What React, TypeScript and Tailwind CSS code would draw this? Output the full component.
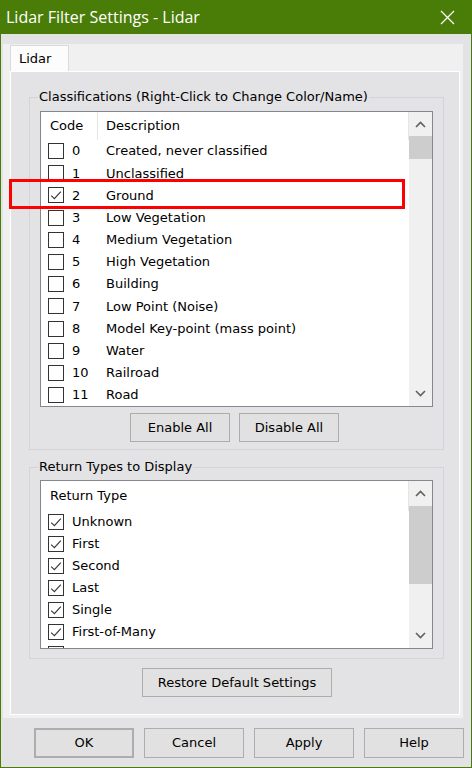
import React from "react";

// classification rows: code, description, checked
const classifications: [string, string, boolean][] = [
  ["0", "Created, never classified", false],
  ["1", "Unclassified", false],
  ["2", "Ground", true],
  ["3", "Low Vegetation", false],
  ["4", "Medium Vegetation", false],
  ["5", "High Vegetation", false],
  ["6", "Building", false],
  ["7", "Low Point (Noise)", false],
  ["8", "Model Key-point (mass point)", false],
  ["9", "Water", false],
  ["10", "Railroad", false],
  ["11", "Road", false],
];

const returnTypes = ["Unknown", "First", "Second", "Last", "Single", "First-of-Many"];

function Check({ on }: { on: boolean }) {
  return (
    <span className="w-[16px] h-[16px] border border-[#333333] bg-white flex items-center justify-center shrink-0">
      {on && (
        <svg width="14" height="14" viewBox="0 0 14 14">
          <path d="M2.2 7.6 L5.4 10.6 L11.8 3.6" fill="none" stroke="#3a3a3a" strokeWidth="1.2" />
        </svg>
      )}
    </span>
  );
}

function Chevron({ up }: { up?: boolean }) {
  return (
    <svg width="11" height="7" viewBox="0 0 11 7">
      <path
        d={up ? "M1 6 L5.5 1.5 L10 6" : "M1 1 L5.5 5.5 L10 1"}
        fill="none"
        stroke="#606060"
        strokeWidth="1.6"
      />
    </svg>
  );
}

function ScrollBar({ upClass, thumbClass }: { upClass: string; thumbClass: string }) {
  return (
    <div className="w-[23px] h-full bg-[#f0f0f0] flex flex-col shrink-0">
      <div className={`${upClass} flex items-center justify-center shrink-0`}>
        <Chevron up />
      </div>
      <div className={`${thumbClass} bg-[#cdcdcd] shrink-0`} />
      <div className="flex-1" />
      <div className="h-[25px] flex items-center justify-center shrink-0">
        <Chevron />
      </div>
    </div>
  );
}

function Button({ label, className = "" }: { label: string; className?: string }) {
  return (
    <button
      className={`bg-[#e1e1e1] border border-[#adadad] text-black text-[13px] leading-[16px] flex items-center justify-center ${className}`}
    >
      {label}
    </button>
  );
}

export default function App() {
  return (
    <div className="relative w-[472px] h-[768px] bg-[#4a7d08] flex flex-col px-[1px] pb-[1px] font-['DejaVu_Sans',sans-serif] text-black select-none">
      {/* title bar */}
      <div className="h-[34px] flex items-center justify-between pl-[5px] pr-[16px] shrink-0">
        <span className="text-white text-[16px] font-['Open_Sans',sans-serif] leading-none">
          Lidar Filter Settings - Lidar
        </span>
        <svg width="15" height="15" viewBox="0 0 15 15">
          <path d="M1 1 L14 14 M14 1 L1 14" stroke="white" strokeWidth="1.3" />
        </svg>
      </div>

      <div className="flex-1 bg-[#e3e3e6] flex flex-col">
        {/* tab control */}
        <div className="mt-[10px] ml-[2px] w-[460px] bg-[#f0f0f0] pb-[3px]">
          <div className="h-[27px] pl-[7px] flex items-end">
            <div className="w-[59px] h-[26px] bg-[#fcfcfc] border border-b-0 border-[#dadada] text-[13px] pl-[8px] flex items-center">
              Lidar
            </div>
          </div>
          <div className="ml-[7px] w-[450px] h-[644px] border border-white bg-[#e3e3e6] flex flex-col">
            {/* classifications group */}
            <fieldset className="mt-[16px] ml-[18px] w-[415px] border border-[#d4d4d8] px-[10px] pb-[7px]">
              <legend className="ml-[-2px] px-[1px] text-[13px] leading-[18px]">
                Classifications (Right-Click to Change Color/Name)
              </legend>
              <div className="mt-[5px] h-[296px] border border-[#828790] bg-white flex overflow-hidden">
                <div className="flex-1 flex flex-col overflow-hidden">
                  <div className="h-[28px] flex shrink-0 text-[13px]">
                    <div className="w-[57px] pl-[9px] border-r border-[#e5e5e5] flex items-center">Code</div>
                    <div className="flex-1 pl-[8px] border-r border-[#e5e5e5] flex items-center">Description</div>
                  </div>
                  {classifications.map(([code, desc, on]) => (
                    <div key={code} className="h-[22.2px] flex items-center shrink-0 text-[13px]">
                      <div className="w-[57px] pl-[7px] flex items-center">
                        <Check on={on} />
                        <span className="ml-[8px]">{code}</span>
                      </div>
                      <div className="pl-[8px] whitespace-nowrap">{desc}</div>
                    </div>
                  ))}
                </div>
                <ScrollBar upClass="h-[24px]" thumbClass="h-[23px]" />
              </div>
              <div className="mt-[6px] flex gap-[9px] pl-[90px]">
                <Button label="Enable All" className="w-[100px] h-[29px]" />
                <Button label="Disable All" className="w-[100px] h-[29px]" />
              </div>
            </fieldset>

            {/* return types group */}
            <fieldset className="mt-[8px] ml-[18px] w-[415px] border border-[#d4d4d8] px-[10px] pb-[9px]">
              <legend className="ml-[-2px] px-[1px] text-[13px] leading-[18px]">Return Types to Display</legend>
              <div className="mt-[4px] h-[169px] border border-[#828790] bg-white flex overflow-hidden">
                <div className="flex-1 flex flex-col overflow-hidden">
                  <div className="h-[30px] flex shrink-0 text-[13px]">
                    <div className="flex-1 pl-[9px] border-r border-[#e5e5e5] flex items-center">Return Type</div>
                  </div>
                  {returnTypes.map((t) => (
                    <div key={t} className="h-[22px] flex items-center shrink-0 pl-[7px] text-[13px]">
                      <Check on />
                      <span className="ml-[8px]">{t}</span>
                    </div>
                  ))}
                  {/* next row, only its checkbox top shows */}
                  <div className="h-[22px] flex items-center shrink-0 pl-[7px]">
                    <Check on />
                  </div>
                </div>
                <ScrollBar upClass="h-[25px]" thumbClass="h-[78px]" />
              </div>
            </fieldset>

            <Button label="Restore Default Settings" className="mt-[9px] ml-[131px] w-[190px] h-[29px]" />
          </div>
        </div>

        {/* dialog buttons */}
        <div className="mt-[10px] ml-[33px] flex gap-[10px]">
          <Button label="OK" className="w-[100px] h-[30px] border-2 border-[#0078d7]" />
          <Button label="Cancel" className="w-[100px] h-[30px]" />
          <Button label="Apply" className="w-[100px] h-[30px]" />
          <Button label="Help" className="w-[100px] h-[30px]" />
        </div>
      </div>

      {/* annotation highlight around the Ground row */}
      <div className="absolute left-[9px] top-[179px] w-[396px] h-[30px] border-[3px] border-[#ff0000] pointer-events-none" />
    </div>
  );
}
